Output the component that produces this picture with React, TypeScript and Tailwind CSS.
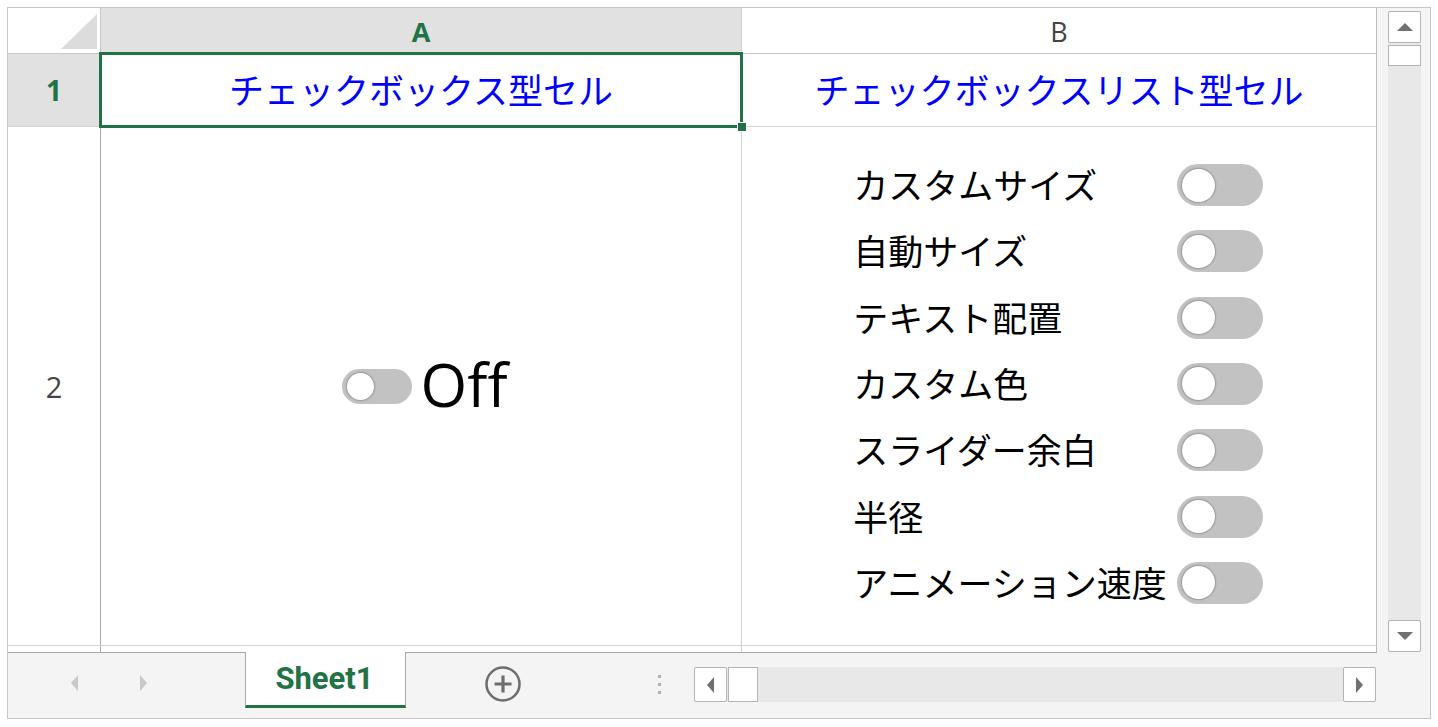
import React from "react";

const JP = { fontFamily: '"Noto Sans CJK JP", "Noto Sans", sans-serif' } as React.CSSProperties;

function Toggle({ w, h, k }: { w: number; h: number; k: number }) {
  const pad = (h - k) / 2;
  return (
    <div className="relative shrink-0 rounded-full bg-[#c2c2c2]" style={{ width: w, height: h }}>
      <div
        className="absolute rounded-full bg-white shadow-[0_0_1.5px_1px_rgba(0,0,0,0.22)]"
        style={{ width: k, height: k, left: pad + 1, top: pad }}
      />
    </div>
  );
}

const items = ["カスタムサイズ", "自動サイズ", "テキスト配置", "カスタム色", "スライダー余白", "半径", "アニメーション速度"];

export default function App() {
  return (
    <div className="w-[1438px] h-[727px] bg-white relative overflow-hidden">
      <div className="absolute left-[7px] top-[7px] w-[1424px] h-[712px] border border-[#c6c6c6] flex flex-col bg-[#f4f4f4]">
        {/* top area */}
        <div className="flex h-[644px]">
          {/* grid */}
          <div className="w-[1369px] flex flex-col bg-white border-r border-[#bcbcbc]">
            {/* header row */}
            <div className="flex h-[46px] border-b border-[#c8c8c8] font-['Open_Sans',sans-serif] text-[27px]">
              <div className="w-[93px] border-r border-[#c8c8c8] relative bg-white">
                <div className="absolute right-[3px] bottom-[4px] w-0 h-0 border-l-[36px] border-l-transparent border-b-[35px] border-b-[#dcdcdc]" />
              </div>
              <div className="w-[641px] bg-[#e1e1e1] flex items-center justify-center font-bold text-[#217346] border-r border-[#d4d4d4] leading-none pt-[2px]">A</div>
              <div className="flex-1 flex items-center justify-center text-[#444] leading-none pt-[2px]">B</div>
            </div>
            {/* row 1 */}
            <div className="flex h-[73px] border-b border-[#d4d4d4]">
              <div className="w-[93px] bg-[#e1e1e1] border-r border-[#a8a8a8] flex items-center justify-center font-['Open_Sans',sans-serif] text-[28px] font-bold text-[#217346] leading-none">1</div>
              <div className="w-[641px] relative flex items-center justify-center border-r border-[#d4d4d4]">
                <span style={JP} className="text-[35px] text-[#0000ff] leading-none -mt-[4px]">チェックボックス型セル</span>
                <div className="absolute left-[-2px] top-[-2px] right-[-2px] bottom-[-2px] border-[3px] border-[#217346]" />
                <div className="absolute right-[-6px] bottom-[-6px] w-[10px] h-[10px] bg-[#217346] border border-white" />
              </div>
              <div className="flex-1 flex items-center justify-center">
                <span style={JP} className="text-[35px] text-[#0000ff] leading-none -mt-[4px]">チェックボックスリスト型セル</span>
              </div>
            </div>
            {/* row 2 */}
            <div className="flex h-[519px] border-b border-[#d4d4d4]">
              <div className="w-[93px] border-r border-[#a8a8a8] flex items-center justify-center font-['Open_Sans',sans-serif] text-[29px] text-[#444] leading-none">2</div>
              <div className="w-[641px] border-r border-[#d4d4d4] flex items-center justify-center gap-[8px] pl-[8px]">
                <Toggle w={70} h={35} k={27} />
                <span className="font-['Open_Sans',sans-serif] text-[60px] leading-none text-black -mt-[4px]">Off</span>
              </div>
              <div className="flex-1 flex items-center justify-center pb-[4px] pr-[2px]">
                <div className="grid grid-cols-[auto_auto] gap-x-[10px] items-center">
                  {items.map((t) => (
                    <React.Fragment key={t}>
                      <div style={JP} className="h-[66.3px] flex items-center text-[35px] text-black leading-none pb-[3px]">{t}</div>
                      <Toggle w={86} h={42} k={33} />
                    </React.Fragment>
                  ))}
                </div>
              </div>
            </div>
            {/* partial row 3 */}
            <div className="flex flex-1">
              <div className="w-[93px] border-r border-[#a8a8a8]" />
              <div className="w-[641px] border-r border-[#d4d4d4]" />
              <div className="flex-1" />
            </div>
          </div>
          {/* vertical scrollbar */}
          <div className="flex-1 flex justify-center pt-[3px] pl-[2px]">
            <div className="w-[33px] h-full bg-[#e8e8e8] flex flex-col">
              <div className="h-[32px] bg-white border border-[#b4b4b4] rounded-[2px] flex items-center justify-center">
                <div className="w-0 h-0 border-l-[8px] border-r-[8px] border-b-[8px] border-l-transparent border-r-transparent border-b-[#707070]" />
              </div>
              <div className="h-[21px] mt-[2px] bg-white border border-[#b4b4b4]" />
              <div className="flex-1" />
              <div className="h-[32px] bg-white border border-[#b4b4b4] rounded-[2px] flex items-center justify-center">
                <div className="w-0 h-0 border-l-[8px] border-r-[8px] border-t-[8px] border-l-transparent border-r-transparent border-t-[#707070]" />
              </div>
            </div>
          </div>
        </div>
        {/* tab bar */}
        <div className="flex-1 flex items-start relative">
          <div className="absolute left-0 top-0 w-[1369px] h-px bg-[#a8a8a8]" />
          <div className="w-[237px] h-[62px] flex items-center">
            <div className="ml-[63px] w-0 h-0 border-t-[8px] border-b-[8px] border-r-[7px] border-t-transparent border-b-transparent border-r-[#c8c8c8]" />
            <div className="ml-[62px] w-0 h-0 border-t-[8px] border-b-[8px] border-l-[7px] border-t-transparent border-b-transparent border-l-[#c8c8c8]" />
          </div>
          <div className="relative z-10 w-[161px] h-[56px] bg-white border-l border-r border-[#a8a8a8] border-b-[3px] border-b-[#217346] flex items-center justify-center">
            <span className="font-['Roboto',sans-serif] font-bold text-[31px] text-[#217346] leading-none -ml-[2px]">Sheet1</span>
          </div>
          <div className="w-[195px] h-[62px] flex items-center justify-center">
            <svg width="38" height="38" viewBox="0 0 38 38" className="-ml-[2px] mt-[2px]">
              <circle cx="19" cy="19" r="16.5" fill="none" stroke="#6e6e6e" strokeWidth="2.5" />
              <path d="M19 10.5v17M10.5 19h17" stroke="#6e6e6e" strokeWidth="3.2" />
            </svg>
          </div>
          <div className="ml-[53px] w-[10px] h-[62px] flex flex-col items-center justify-center gap-[5px] pt-[2px]">
            <div className="w-[3px] h-[3px] bg-[#b0b0b0]" />
            <div className="w-[3px] h-[3px] bg-[#b0b0b0]" />
            <div className="w-[3px] h-[3px] bg-[#b0b0b0]" />
          </div>
          <div className="ml-[30px] mt-[15px] w-[682px] h-[35px] bg-[#e8e8e8] flex">
            <div className="w-[33px] h-full bg-white border border-[#b4b4b4] rounded-[2px] flex items-center justify-center">
              <div className="w-0 h-0 border-t-[8px] border-b-[8px] border-r-[7px] border-t-transparent border-b-transparent border-r-[#707070]" />
            </div>
            <div className="w-[30px] h-full bg-white border border-[#b4b4b4] ml-[1px]" />
            <div className="flex-1" />
            <div className="w-[33px] h-full bg-white border border-[#b4b4b4] rounded-[2px] flex items-center justify-center">
              <div className="w-0 h-0 border-t-[8px] border-b-[8px] border-l-[7px] border-t-transparent border-b-transparent border-l-[#707070]" />
            </div>
          </div>
        </div>
      </div>
    </div>
  );
}
